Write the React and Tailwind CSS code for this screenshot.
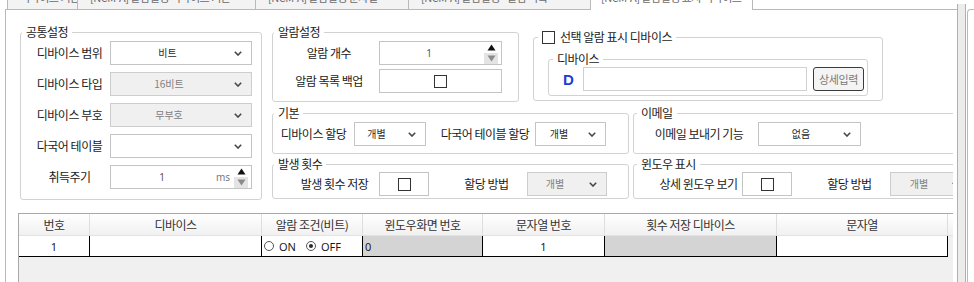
import React from "react";

const Chevron = () => (
  <svg width="8" height="5" viewBox="0 0 8 5" className="shrink-0">
    <polyline points="0.8,0.8 4,4 7.2,0.8" fill="none" stroke="#474747" strokeWidth="1.6" />
  </svg>
);

function Dropdown({ box, textBox, text, disabled }) {
  return (
    <div
      className={`${box} h-[24px] shrink-0 flex items-center border ${
        disabled ? "border-[#cdcdcd] bg-[#f0f0f0]" : "border-[#c4c4c4] bg-white"
      }`}
    >
      <span
        className={`${textBox} text-center text-[10px] tracking-normal leading-none ${
          disabled ? "text-[#808080]" : "text-[#2a2a2a]"
        }`}
      >
        {text}
      </span>
      <span className="ml-auto mr-[9px] flex">
        <Chevron />
      </span>
    </div>
  );
}

function Check() {
  return <span className="block w-[13px] h-[13px] shrink-0 border border-[#333333] bg-white" />;
}

function CheckBox({ box }) {
  return (
    <div className={`${box} h-[24px] shrink-0 flex items-center justify-center border border-[#c4c4c4] bg-white`}>
      <Check />
    </div>
  );
}

function SpinButtons() {
  return (
    <div className="ml-auto mr-[3px] flex flex-col w-[14px] h-[22px]">
      <div className="h-[11px] flex items-center justify-center bg-white">
        <svg width="9" height="7" viewBox="0 0 9 7">
          <polygon points="4.5,0.5 8.5,6.5 0.5,6.5" fill="#111111" />
        </svg>
      </div>
      <div className="h-[11px] flex items-center justify-center bg-[#e4e4e4]">
        <svg width="9" height="7" viewBox="0 0 9 7">
          <polygon points="0.5,0.5 8.5,0.5 4.5,6.5" fill="#8a8a8a" />
        </svg>
      </div>
    </div>
  );
}

function Group({ title, className = "", legendCls = "ml-[1px]", children }) {
  return (
    <fieldset className={`border border-[#d2d2d2] rounded-[3px] min-w-0 shrink-0 ${className}`}>
      <legend className={`${legendCls} px-[4px] leading-[16px]`}>{title}</legend>
      {children}
    </fieldset>
  );
}

function Label({ cls, children }) {
  return <span className={`${cls} shrink-0 text-center whitespace-nowrap leading-none`}>{children}</span>;
}

const tabs = [
  { w: "w-[71px] border-l", t: "디바이스 기본" },
  { w: "w-[178px]", t: "[NCM-A] 알람설정 디바이스 기본" },
  { w: "w-[153px]", t: "[NCM-A] 알람설정 문자열" },
  { w: "w-[182px]", t: "[NCM-A] 알람설정 - 알람 목록" },
];

function Radio({ on }) {
  return (
    <span className="w-[10px] h-[10px] rounded-full border border-[#555555] bg-white flex items-center justify-center shrink-0">
      {on && <span className="w-[4px] h-[4px] rounded-full bg-[#2a2a2a]" />}
    </span>
  );
}

export default function App() {
  return (
    <div className="w-[974px] h-[282px] overflow-hidden bg-white flex font-['Noto_Sans_CJK_KR',sans-serif] text-[12px] tracking-[-0.5px] text-[#1a1a1a]">
      <div className="w-[5px] shrink-0" />
      <div className="w-[952px] shrink-0 flex flex-col">
        {/* tab strip */}
        <div className="flex h-[10px] shrink-0">
          <div className="w-[2px] border-b border-[#b9b9b9]" />
          {tabs.map((tb, i) => (
            <div
              key={i}
              className={`${tb.w} h-[10px] overflow-hidden border-r border-b border-[#b9b9b9] bg-[#f3f3f3] pl-[12px]`}
            >
              <div className="-mt-[8px] text-[11px] leading-[11px] text-[#6a6a6a] whitespace-nowrap">{tb.t}</div>
            </div>
          ))}
          <div className="w-[162px] h-[10px] overflow-hidden border-r border-[#b9b9b9] bg-white pl-[10px]">
            <div className="-mt-[8px] text-[11px] leading-[11px] text-[#6a6a6a] whitespace-nowrap">[NCM-A] 알람설정 표시 디바이스</div>
          </div>
          <div className="flex-1 border-b border-[#b9b9b9]" />
        </div>
        {/* frame */}
        <div className="flex-1 border-l border-[#b9b9b9] flex">
          <div className="w-[947px] overflow-hidden pl-[12px] pt-[14px] flex flex-col">
            <div className="flex ml-[2px] items-start">
              {/* 공통설정 */}
              <Group title="공통설정" className="w-[242px]">
                <div className="flex flex-col gap-[7px] pt-[1px] pb-[10px]">
                  <div className="flex items-center">
                    <Label cls="ml-[8px] w-[81px]">디바이스 범위</Label>
                    <Dropdown box="w-[142px]" textBox="w-[113px]" text="비트" />
                  </div>
                  <div className="flex items-center">
                    <Label cls="ml-[8px] w-[81px]">디바이스 타입</Label>
                    <Dropdown box="w-[142px]" textBox="w-[116px]" text="16비트" disabled />
                  </div>
                  <div className="flex items-center">
                    <Label cls="ml-[8px] w-[81px]">디바이스 부호</Label>
                    <Dropdown box="w-[142px]" textBox="w-[116px]" text="무부호" disabled />
                  </div>
                  <div className="flex items-center">
                    <Label cls="ml-[8px] w-[81px]">다국어 테이블</Label>
                    <Dropdown box="w-[142px]" textBox="w-[113px]" text="" />
                  </div>
                  <div className="flex items-center">
                    <Label cls="ml-[8px] w-[81px]">취득주기</Label>
                    <div className="w-[142px] h-[24px] shrink-0 flex items-center border border-[#c4c4c4] bg-white tracking-normal">
                      <span className="w-[102px] text-center text-[10px] leading-none text-[#555555] font-['Noto_Sans',sans-serif]">1</span>
                      <span className="ml-[3px] text-[10px] leading-none text-[#7a7a7a] font-['Noto_Sans',sans-serif]">ms</span>
                      <SpinButtons />
                    </div>
                  </div>
                </div>
              </Group>

              <div className="ml-[10px] flex flex-col">
                <div className="flex items-start">
                  {/* 알람설정 */}
                  <Group title="알람설정" className="w-[247px]">
                    <div className="flex flex-col gap-[4px] pt-[1px] pb-[8px]">
                      <div className="flex items-center">
                        <Label cls="ml-[6px] w-[100px]">알람 개수</Label>
                        <div className="w-[123px] h-[24px] shrink-0 flex items-center border border-[#c4c4c4] bg-white tracking-normal">
                          <span className="w-[98px] text-center text-[10px] leading-none text-[#555555] font-['Noto_Sans',sans-serif]">1</span>
                          <SpinButtons />
                        </div>
                      </div>
                      <div className="flex items-center">
                        <Label cls="ml-[6px] w-[100px]">알람 목록 백업</Label>
                        <CheckBox box="w-[123px]" />
                      </div>
                    </div>
                  </Group>

                  {/* 선택 알람 표시 디바이스 */}
                  <Group
                    className="w-[350px] ml-[14px] mt-[5px]"
                    legendCls="ml-[4px]"
                    title={
                      <span className="flex items-center gap-[5px] h-[16px]">
                        <Check />
                        <span>선택 알람 표시 디바이스</span>
                      </span>
                    }
                  >
                    <div className="pt-[6px] px-[14px] pb-[4px]">
                      <Group title="디바이스" className="w-[320px]" legendCls="ml-[4px]">
                        <div className="flex items-center pb-[4px]">
                          <span className="ml-[14px] w-[20px] shrink-0 text-[15px] tracking-normal leading-none font-bold text-[#1c3ddc] font-['Liberation_Sans',sans-serif]">
                            D
                          </span>
                          <div className="w-[224px] h-[24px] shrink-0 border border-[#d0d0d0] bg-white" />
                          <div className="ml-[6px] w-[51px] h-[24px] shrink-0 flex items-center justify-center border border-[#3a3a3a] rounded-[3px] bg-[#f4f4f4] text-[11px] tracking-[-0.4px] text-[#7a7a7a] leading-none">
                            상세입력
                          </div>
                        </div>
                      </Group>
                    </div>
                  </Group>
                </div>

                <div className="flex mt-[3px]">
                  <Group title="기본" className="w-[357px]">
                    <div className="flex items-center pt-[1px] pb-[7px]">
                      <Label cls="w-[81px]">디바이스 할당</Label>
                      <Dropdown box="w-[72px]" textBox="w-[43px]" text="개별" />
                      <Label cls="ml-[9px] w-[100px]">다국어 테이블 할당</Label>
                      <Dropdown box="w-[71px]" textBox="w-[46px]" text="개별" />
                    </div>
                  </Group>
                  <Group title="이메일" className="w-[350px] ml-[4px]" legendCls="ml-[3px]">
                    <div className="flex items-center pt-[1px] pb-[7px]">
                      <Label cls="ml-[6px] w-[118px]">이메일 보내기 기능</Label>
                      <Dropdown box="w-[103px]" textBox="w-[92px]" text="없음" />
                    </div>
                  </Group>
                </div>

                <div className="flex mt-[2px]">
                  <Group title="발생 횟수" className="w-[357px]">
                    <div className="flex items-center pb-[2px]">
                      <Label cls="ml-[17px] w-[89px]">발생 횟수 저장</Label>
                      <CheckBox box="w-[50px]" />
                      <Label cls="ml-[29px] w-[57px]">할당 방법</Label>
                      <div className="ml-[12px] flex">
                        <Dropdown box="w-[80px]" textBox="w-[54px]" text="개별" disabled />
                      </div>
                    </div>
                  </Group>
                  <Group title="윈도우 표시" className="w-[350px] ml-[4px]" legendCls="ml-[3px]">
                    <div className="flex items-center pb-[2px]">
                      <Label cls="ml-[21px] w-[87px]">상세 윈도우 보기</Label>
                      <CheckBox box="w-[50px]" />
                      <Label cls="ml-[29px] w-[57px]">할당 방법</Label>
                      <div className="ml-[12px] flex">
                        <Dropdown box="w-[80px]" textBox="w-[56px]" text="개별" disabled />
                      </div>
                    </div>
                  </Group>
                </div>
              </div>
            </div>

            {/* table */}
            <div className="mt-[13px] flex-1 border-l border-t border-[#a8a8a8] bg-[#f0f0f0] flex flex-col">
              <div className="flex h-[22px] shrink-0 border-b border-[#e2e2e2] bg-gradient-to-b from-white to-[#f1f1f1] text-[#333333]">
                <div className="w-[71px] shrink-0 border-r border-[#dedede] flex items-center justify-center">번호</div>
                <div className="w-[172px] shrink-0 border-r border-[#dedede] flex items-center justify-center">디바이스</div>
                <div className="w-[101px] shrink-0 border-r border-[#dedede] flex items-center justify-center">알람 조건(비트)</div>
                <div className="w-[120px] shrink-0 border-r border-[#dedede] flex items-center justify-center">윈도우화면 번호</div>
                <div className="w-[122px] shrink-0 border-r border-[#dedede] flex items-center justify-center">문자열 번호</div>
                <div className="w-[172px] shrink-0 border-r border-[#dedede] flex items-center justify-center">횟수 저장 디바이스</div>
                <div className="w-[171px] shrink-0 border-r border-[#dedede] flex items-center justify-center">문자열</div>
                <div className="flex-1" />
              </div>
              <div className="flex h-[21px] shrink-0 font-['Noto_Sans',sans-serif] text-[11px] tracking-normal text-[#1a1a1a]">
                <div className="w-[71px] shrink-0 border-r border-b border-black bg-white flex items-center justify-center leading-none">1</div>
                <div className="w-[172px] shrink-0 border-r border-b border-black bg-white" />
                <div className="w-[101px] shrink-0 border-r border-b border-black bg-white flex items-center pl-[2px] leading-none">
                  <Radio />
                  <span className="ml-[5px]">ON</span>
                  <span className="ml-[10px] flex"><Radio on /></span>
                  <span className="ml-[5px]">OFF</span>
                </div>
                <div className="w-[120px] shrink-0 border-r border-b border-black bg-[#d4d4d4] flex items-center pl-[2px] leading-none">0</div>
                <div className="w-[122px] shrink-0 border-r border-b border-black bg-white flex items-center justify-center leading-none">1</div>
                <div className="w-[172px] shrink-0 border-r border-b border-black bg-[#d4d4d4]" />
                <div className="w-[171px] shrink-0 border-r border-b border-black bg-white" />
                <div className="flex-1" />
              </div>
            </div>
          </div>
        </div>
      </div>
      {/* right splitter / panel */}
      <div className="w-[9px] shrink-0 mt-[4px] border-l border-r border-[#b0b0b0] bg-[#ececec]" />
      <div className="flex-1 ml-[1px] mt-[9px] border-l border-t border-[#b9b9b9] rounded-tl-[4px]" />
    </div>
  );
}
